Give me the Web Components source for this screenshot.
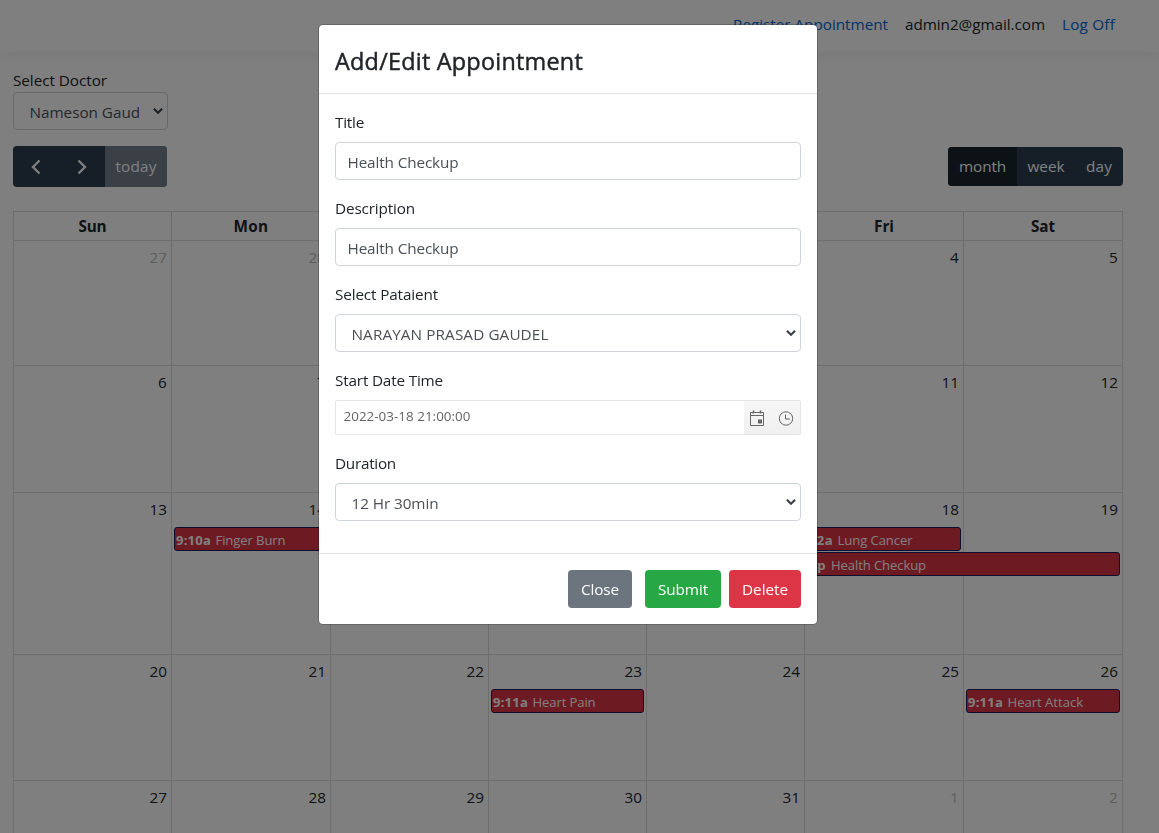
<!DOCTYPE html>
<html lang="en">
<head>
<meta charset="utf-8">
<title>Appointments</title>
<style>
html,body{margin:0;height:100%;overflow:hidden;background:#fff}
body{font:15.3px/24px "Open Sans","Noto Sans",sans-serif;color:#212529}
</style>
</head>
<body>
<appointment-page></appointment-page>
<script>
function component(name, html, setup) {
  customElements.define(name, class extends HTMLElement {
    connectedCallback() {
      if (this.shadowRoot) return;
      const root = this.attachShadow({mode: 'open'});
      const t = document.createElement('template');
      t.innerHTML = typeof html === 'function' ? html(this) : html;
      root.append(t.content.cloneNode(true));
      if (setup) setup(this, root);
    }
  });
}

/* text tracked to a given width */
component('fit-text', el => `<style>:host{display:inline-block;white-space:pre;width:${el.getAttribute('w')}px}</style><span><slot></slot></span>`,
  (el, root) => {
    const s = root.querySelector('span');
    const n = el.textContent.length;
    s.style.letterSpacing = ((+el.getAttribute('w') - s.getBoundingClientRect().width) / n).toFixed(3) + 'px';
  });

component('site-header', `<style>
:host{display:flex;justify-content:flex-end;box-sizing:border-box;height:52px;padding:12px 44px 0 0;gap:17px;box-shadow:0 4px 12px rgba(0,0,0,.055);background:#fff}
a{color:#0366d6}
</style><a><fit-text w="155">Register Appointment</fit-text></a><span><fit-text w="140">admin2@gmail.com</fit-text></span><a><fit-text w="53">Log Off</fit-text></a>`);

component('select-box', `<style>
:host{display:flex;align-items:center;box-sizing:border-box;height:38px;border:1px solid #ced4da;border-radius:4px;padding:0 3px 0 15.500px;color:#495057;background:#fff}
div{flex:1;min-width:0;overflow:hidden;white-space:nowrap;margin-right:var(--clip,8px);padding-top:1px}
svg{flex:none}
</style><div><slot></slot></div><svg width="12" height="8" viewBox="0 0 12 8"><path d="M1.900 1.800 6 5.700l4.100-3.900" fill="none" stroke="#3b4046" stroke-width="2.100"/></svg>`);

component('text-box', `<style>
:host{display:flex;align-items:center;box-sizing:border-box;height:38px;border:1px solid #ced4da;border-radius:4px;padding:1px 11.500px 0;color:#495057}
</style><slot></slot>`);

component('date-time-box', `<style>
:host{display:flex;box-sizing:border-box;height:35px;border:1px solid #e5e5e5;border-radius:2px;color:#656565;font-size:13.4px;overflow:hidden}
.v{flex:1;padding:3px 7.500px;line-height:24px}
.i{display:flex;align-items:center;justify-content:space-between;width:56px;box-sizing:border-box;padding:0 6px 0 5px;background:linear-gradient(#f6f6f6,#f0f0f0)}
</style><div class="v"><slot></slot></div><div class="i">
<svg width="16" height="16" viewBox="0 0 16 16" fill="none" stroke="#656565"><path d="M1.500 2.500h13v13h-13zM1 5.500h14"/><path d="M4.500.5v3M11.500.5v3" stroke-width="1.500"/><path d="M9 9.500h4v4H9z" fill="#656565" stroke="none"/></svg>
<svg width="16" height="16" viewBox="0 0 16 16" fill="none" stroke="#656565"><circle cx="8" cy="8.500" r="6.700"/><path d="M7.500 4.500v4.500H12"/></svg></div>`);

component('form-field', el => `<style>:host{display:block;margin-bottom:16px}label{display:block;height:24px;margin-bottom:8px}</style>
<label><fit-text w="${el.getAttribute('w')}">${el.getAttribute('label')}</fit-text></label><slot></slot>`);

component('action-button', el => `<style>
:host{display:flex;align-items:center;justify-content:center;box-sizing:border-box;height:38px;width:${el.getAttribute('width')}px;border-radius:4px;color:#fff;background:${el.getAttribute('color')}}
</style><slot></slot>`);

component('modal-dialog', `<style>
:host{position:fixed;inset:0;z-index:10;background:rgba(0,0,0,.5);padding-top:24px;display:block}
section{width:498px;margin:0 0 0 318px;border:1px solid rgba(0,0,0,.2);border-radius:5px;background:#fff;background-clip:padding-box}
header{padding:18px 16px 14px;border-bottom:1px solid #dee2e6;font-size:23.4px;line-height:36px;height:36px;-webkit-text-stroke:.45px #212529}
main{padding:16px}
footer{display:flex;justify-content:flex-end;padding:16px;gap:8px;border-top:1px solid #dee2e6}
</style><section><header><slot name="title"></slot></header><main><slot></slot></main><footer><slot name="actions"></slot></footer></section>`);

component('calendar-toolbar', `<style>
:host{display:flex;justify-content:space-between;align-items:center;height:41px;margin-top:16px;color:#fff}
div{display:flex;border-radius:4px;overflow:hidden;background:#2c3e50}
.l{height:41px}.r{height:39px}
span{display:flex;align-items:center;justify-content:center}
fit-text{padding-bottom:2px}
.a{width:46px}.t{width:62px}.off{background:#fff}.off i{display:flex;font-style:normal;align-items:center;justify-content:center;width:62px;height:41px;opacity:.65;background:#2c3e50}
.m{width:69px;background:#1a252f}.w{width:58px}.d{width:48px}
</style><div class="l"><span class="a"><svg width="16" height="18" viewBox="0 0 16 18"><path d="M11.500 2.500 5 9l6.500 6.500" fill="none" stroke="#fff" stroke-width="2.300"/></svg></span><span class="a"><svg width="16" height="18" viewBox="0 0 16 18"><path d="M4.500 2.500 11 9l-6.500 6.500" fill="none" stroke="#fff" stroke-width="2.300"/></svg></span><span class="off"><i><fit-text w="41">today</fit-text></i></span></div>
<div class="r"><span class="m"><fit-text w="47">month</fit-text></span><span class="w"><fit-text w="37">week</fit-text></span><span class="d"><fit-text w="26">day</fit-text></span></div>`);

component('calendar-event', el => `<style>
:host{position:relative;display:flex;align-items:center;box-sizing:border-box;height:24px;margin:0 2px 1px;width:${el.getAttribute('span') === '2' ? '313px' : 'auto'};z-index:1;border:1px solid #1a1a5c;border-radius:3px;background:#dc3545;color:#fff;padding:1px 1px 0;font-size:13.1px;gap:4.500px}
b{display:flex;font-weight:700}
</style><b><slot name="time"></slot></b><slot></slot>`);

const event_ = (time, tw, text, w, span) => `<calendar-event span="${span || 1}"><fit-text slot="time" w="${tw}">${time}</fit-text><fit-text w="${w}">${text}</fit-text></calendar-event>`;
const events = {
  '2-1': event_('9:10a', 35, 'Finger Burn', 70),
  '2-5': event_('12a', 24, 'Lung Cancer', 75) + event_('9p', 17.5, 'Health Checkup', 95, 2),
  '3-3': event_('9:11a', 35, 'Heart Pain', 63),
  '3-6': event_('9:11a', 35, 'Heart Attack', 75.5)
};
const names = [['Sun', 28], ['Mon', 35], ['Tue', 27], ['Wed', 33], ['Thu', 29], ['Fri', 20], ['Sat', 24]];
const cells = [];
for (let r = 0; r < 5; r++) for (let c = 0; c < 7; c++) {
  const k = r * 7 + c - 1;
  const other = k < 1 || k > 31;
  const n = k < 1 ? 28 + k : k > 31 ? k - 31 : k;
  cells.push(`<div class="c"><p class="${other ? 'o' : ''}"><fit-text w="${n > 9 ? 17.5 : 9}">${n}</fit-text></p>${events[r + '-' + c] || ''}</div>`);
}
component('month-calendar', `<style>
:host{display:grid;grid-template-columns:158px 159px 158px 158px 158px 159px 159px;grid-template-rows:29px 125px 127px 162px 126px 127px;box-sizing:border-box;width:1110px;margin-top:24px;border:solid #ddd;border-width:0 1px 0 0}
div{box-sizing:border-box;border:solid #ddd;border-width:1px 0 0 1px;min-width:0}
.h{font-weight:700;text-align:center;padding-top:2px}
p{margin:0;height:24px;padding:4px 4px 6px 0;text-align:right}
.o{opacity:.3}
</style>${names.map(n => `<div class="h"><fit-text w="${n[1]}">${n[0]}</fit-text></div>`).join('')}${cells.join('')}`);

component('appointment-page', `<style>
:host{display:block;height:833px;overflow:hidden}
main{padding:16px 13px 0;width:1110px}
.doc{width:155px;--clip:13.5px}
label{display:block;height:24px}
</style>
<site-header></site-header>
<main><label><fit-text w="94">Select Doctor</fit-text></label>
<select-box class="doc"><fit-text w="123">Nameson Gaudel</fit-text></select-box>
<calendar-toolbar></calendar-toolbar>
<month-calendar></month-calendar></main>
<modal-dialog>
<fit-text slot="title" w="248">Add/Edit Appointment</fit-text>
<form-field label="Title" w="29"><text-box><fit-text w="111">Health Checkup</fit-text></text-box></form-field>
<form-field label="Description" w="80"><text-box><fit-text w="111">Health Checkup</fit-text></text-box></form-field>
<form-field label="Select Pataient" w="103"><select-box><fit-text w="197">NARAYAN PRASAD GAUDEL</fit-text></select-box></form-field>
<form-field label="Start Date Time" w="108"><date-time-box><fit-text w="127">2022-03-18 21:00:00</fit-text></date-time-box></form-field>
<form-field label="Duration" w="61"><select-box><fit-text w="87">12 Hr 30min</fit-text></select-box></form-field>
<action-button slot="actions" width="64" color="#6c757d" style="margin-right:5px"><fit-text w="38">Close</fit-text></action-button>
<action-button slot="actions" width="76" color="#28a745"><fit-text w="50">Submit</fit-text></action-button>
<action-button slot="actions" width="72" color="#dc3545"><fit-text w="46">Delete</fit-text></action-button>
</modal-dialog>`);
</script>
</body>
</html>
